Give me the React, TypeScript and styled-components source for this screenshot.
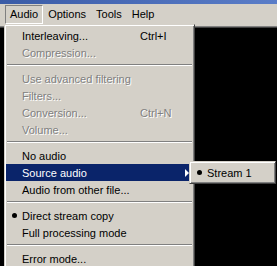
import React from 'react';
import styled, { createGlobalStyle, css } from 'styled-components';

const GlobalStyle = createGlobalStyle`
  html, body {
    margin: 0;
    padding: 0;
    background: #000;
  }
  body {
    font-family: 'Liberation Sans', Arial, sans-serif;
    font-size: 11px;
  }
`;

const Window = styled.div`
  position: relative;
  width: 277px;
  height: 266px;
  overflow: hidden;
  display: flex;
  flex-direction: column;
  background: #d4d0c8;
`;

const TitleBar = styled.div`
  height: 4px;
  flex: none;
  background: linear-gradient(90deg, #3a5ba6 0%, #4a6cb8 50%, #5a7dc8 100%);
`;

const MenuBar = styled.div`
  height: 20px;
  flex: none;
  display: flex;
  align-items: center;
  padding-left: 5px;
  background: #d4d0c8;
`;

const BarItem = styled.div<{ $open?: boolean }>`
  height: 17px;
  line-height: 17px;
  padding: 0 4px;
  color: #000;
  border: 1px solid transparent;
  ${(p) =>
    p.$open &&
    css`
      border-color: #808080 #fff #fff #808080;
    `}
`;

const Workspace = styled.div`
  flex: 1;
  background: #000;
  box-shadow: inset 0 2px #d4d0c8, inset 0 3px #808080, inset 0 4px #404040;
`;

const Popup = styled.div<{ $left: number; $top: number; $width: number }>`
  position: absolute;
  left: ${(p) => p.$left}px;
  top: ${(p) => p.$top}px;
  width: ${(p) => p.$width}px;
  box-sizing: border-box;
  background: #d4d0c8;
  border: 1px solid;
  border-color: #d4d0c8 #404040 #404040 #d4d0c8;
  box-shadow: inset 1px 1px #fff, inset -1px -1px #808080;
  padding: 2px 1px;
`;

const Item = styled.div<{ $active?: boolean; $disabled?: boolean }>`
  display: grid;
  grid-template-columns: 16px 118px 1fr 17px;
  align-items: center;
  height: 17px;
  white-space: nowrap;
  color: #000;
  ${(p) =>
    p.$disabled &&
    css`
      color: #808080;
      text-shadow: 1px 1px 0 #fff;
    `}
  ${(p) =>
    p.$active &&
    css`
      background: #0a246a;
      color: #fff;
    `}
`;

const SubItem = styled(Item)`
  grid-template-columns: 16px 1fr;
`;

const Check = styled.span`
  display: flex;
  justify-content: center;
  align-items: center;
`;

const Bullet = styled.span`
  width: 5px;
  height: 5px;
  border-radius: 50%;
  background: #000;
`;

const Shortcut = styled.span``;

const Arrow = styled.span`
  justify-self: center;
  width: 0;
  height: 0;
  margin-left: 4px;
  border-top: 4px solid transparent;
  border-bottom: 4px solid transparent;
  border-left: 4px solid #fff;
`;

const Separator = styled.div`
  height: 0;
  margin: 3px 1px 4px;
  border-top: 1px solid #808080;
  border-bottom: 1px solid #fff;
`;

type Entry =
  | { sep: true }
  | {
      sep?: false;
      label: string;
      shortcut?: string;
      disabled?: boolean;
      checked?: boolean;
      active?: boolean;
      sub?: boolean;
    };

const entries: Entry[] = [
  { label: 'Interleaving...', shortcut: 'Ctrl+I' },
  { label: 'Compression...', disabled: true },
  { sep: true },
  { label: 'Use advanced filtering', disabled: true },
  { label: 'Filters...', disabled: true },
  { label: 'Conversion...', shortcut: 'Ctrl+N', disabled: true },
  { label: 'Volume...', disabled: true },
  { sep: true },
  { label: 'No audio' },
  { label: 'Source audio', active: true, sub: true },
  { label: 'Audio from other file...' },
  { sep: true },
  { label: 'Direct stream copy', checked: true },
  { label: 'Full processing mode' },
  { sep: true },
  { label: 'Error mode...' },
];

const App = () => (
  <Window>
    <GlobalStyle />
    <TitleBar />
    <MenuBar>
      <BarItem $open>Audio</BarItem>
      <BarItem>Options</BarItem>
      <BarItem>Tools</BarItem>
      <BarItem>Help</BarItem>
    </MenuBar>
    <Workspace />

    <Popup $left={4} $top={24} $width={191}>
      {entries.map((e, i) =>
        e.sep ? (
          <Separator key={i} />
        ) : (
          <Item key={i} $active={e.active} $disabled={e.disabled}>
            <Check>{e.checked && <Bullet />}</Check>
            <span>{e.label}</span>
            <Shortcut>{e.shortcut}</Shortcut>
            {e.sub ? <Arrow /> : <span />}
          </Item>
        ),
      )}
    </Popup>

    <Popup $left={189} $top={161} $width={87}>
      <SubItem>
        <Check>
          <Bullet />
        </Check>
        <span>Stream 1</span>
      </SubItem>
    </Popup>
  </Window>
);

export default App;
